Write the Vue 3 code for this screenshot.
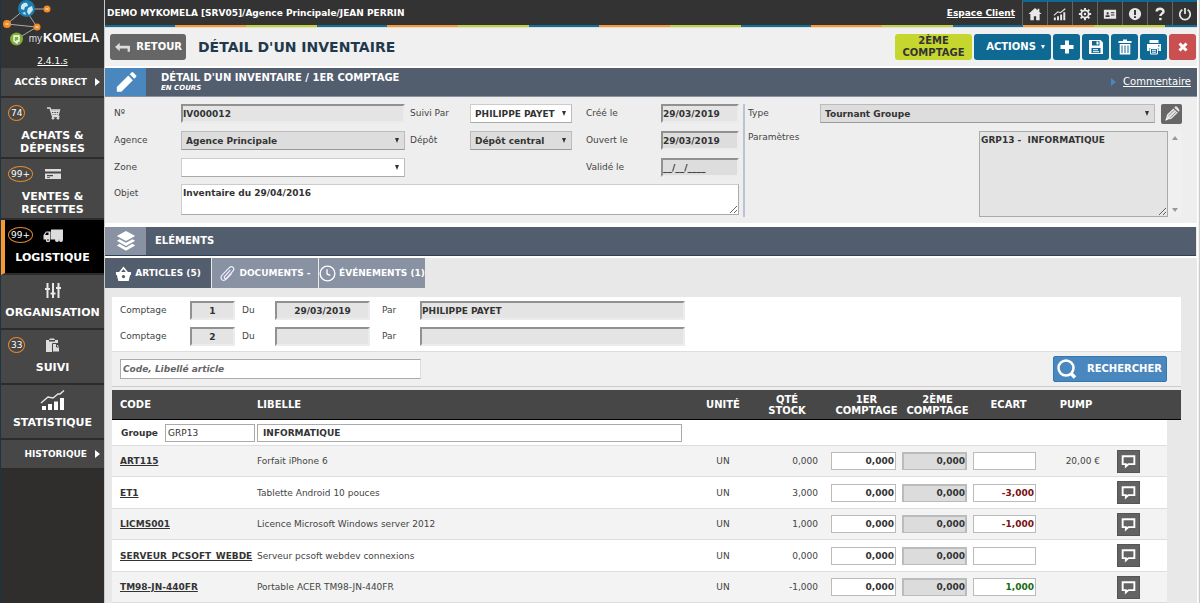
<script setup>
import { ref } from 'vue'

const topIcons = [
  { name: 'Accueil', paths: [{ d: 'M8 1 0.5 8h2.2v7h4v-4.5h2.6V15h4V8h2.2L13 5.6V2h-2v1.8z' }] },
  { name: 'Statistiques', paths: [{ d: 'M1 12h2.2v3H1zM4.6 10.5h2.2V15H4.6zM8.2 8.5h2.2V15H8.2zM11.8 6H14v9h-2.200z' }, { d: 'M1 9.500 5.500 5.500l3 1L14 2', line: 1.2 }] },
  { name: 'Réglages', paths: [{ d: 'M8 3.800a4.200 4.200 0 1 0 0 8.400a4.200 4.200 0 1 0 0-8.400z', line: 2 }, { d: 'M8 1v3M8 12v3M1 8h3M12 8h3M3 3l2 2M11 11l2 2M13 3l-2 2M5 11l-2 2', line: 2.2 }, { d: 'M8 6.600a1.400 1.400 0 1 0 0 2.800a1.400 1.400 0 1 0 0-2.800z' }] },
  { name: 'Profil', paths: [{ d: 'M1 3h14v10.500H1zM3 9.500h4.500v1.800H3zM4.200 6h2.200v2.600H4.200zM9 6v1.200h4V6zM9 8.500v1.200h4V8.500z' }] },
  { name: 'Alertes', paths: [{ d: 'M8 1a7 7 0 1 0 0 14a7 7 0 1 0 0-14zM6.900 3.500h2.200v5.700H6.900zM6.900 10.500h2.200v2.200H6.900z' }] },
  { name: 'Aide', paths: [{ d: 'M4.200 5.200C4.200 0.900 12 1 12 5c0 2.600-3.600 2.600-3.600 5.400', line: 2.800 }, { d: 'M7 12.400h2.800v2.700H7z' }] },
  { name: 'Quitter', paths: [{ d: 'M5 3.200a6 6 0 1 0 6 0M8 1v7', line: 2 }] },
]

const actionIcons = [
  { name: 'Ajouter', paths: [{ d: 'M6 1.500h4V6h4.500v4H10v4.500H6V10H1.500V6H6z' }] },
  { name: 'Enregistrer', paths: [{ d: 'M1 1h11.500L15 3.500V15H1zM4 2v4.500h7.500V2zM8.500 2.600h2v3h-2zM3.500 9v5h9V9z' }, { d: 'M5 10.700h5M5 12.700h6', line: 1 }] },
  { name: 'Supprimer', paths: [{ d: 'M6 0.500h4V2h4.500v2h-13V2H6zM2.700 5h10.600v10.500H2.700zM4.500 6.500v7.500h1V6.500zM7.500 6.500v7.500h1V6.500zM10.500 6.500v7.500h1V6.500z' }] },
  { name: 'Imprimer', paths: [{ d: 'M3.500 1h9v3h-9zM1 5h14v7h-2.500V9h-9v3H1zM12 6.200v1.200h1.500V6.200z' }, { d: 'M4.500 9.500h7v5.500h-7zM6 11.300h4M6 13.200h4', line: 1 }] },
  { name: 'Fermer', paths: [{ d: 'M4.500 4.500l7 7M11.500 4.500l-7 7', line: 3 }] },
]

const menu = [
  { label: 'ACHATS & DÉPENSES', badge: '74', icon: 'cart', size: 'tall' },
  { label: 'VENTES & RECETTES', badge: '99+', icon: 'card', size: 'tall' },
  { label: 'LOGISTIQUE', badge: '99+', icon: 'truck', active: true },
  { label: 'ORGANISATION', icon: 'sliders' },
  { label: 'SUIVI', badge: '33', icon: 'paste' },
  { label: 'STATISTIQUE', icon: 'chart' },
]

const counts = ref([
  { n: '1', date: '29/03/2019', by: 'PHILIPPE PAYET' },
  { n: '2', date: '', by: '' },
])

const rows = ref([
  { code: 'ART115', label: 'Forfait iPhone 6', unit: 'UN', stock: '0,000', c1: '0,000', c2: '0,000', gap: '', pump: '20,00 €' },
  { code: 'ET1', label: 'Tablette Android 10 pouces', unit: 'UN', stock: '3,000', c1: '0,000', c2: '0,000', gap: '-3,000', pump: '' },
  { code: 'LICMS001', label: 'Licence Microsoft Windows server 2012', unit: 'UN', stock: '1,000', c1: '0,000', c2: '0,000', gap: '-1,000', pump: '' },
  { code: 'SERVEUR_PCSOFT_WEBDE', label: 'Serveur pcsoft webdev connexions', unit: 'UN', stock: '0,000', c1: '0,000', c2: '0,000', gap: '', pump: '' },
  { code: 'TM98-JN-440FR', label: 'Portable ACER TM98-JN-440FR', unit: 'UN', stock: '-1,000', c1: '0,000', c2: '0,000', gap: '1,000', pump: '' },
])

const search = ref('')
</script>

<template>
  <div class="app">
    <aside class="side">
      <div class="brand">
        <svg class="logo" viewBox="0 0 104 50" role="img" aria-label="myKOMELA">
          <path d="M26 9h20M24 10 7 24M27 12l10 15M7 24l29 3M35 28 17 39" stroke="#aaa" fill="none" />
          <circle cx="26.500" cy="8.500" r="8.500" fill="#1a7fb0" />
          <path d="M21 6q2-4 6-3l1 3-3 1-1 3-3-1zM28 8l4-2 1 4-4 5-2-3zM22 13l3-1 1 3z" fill="#cfe9f4" />
          <circle cx="47" cy="9" r="3.500" fill="#f28c28" />
          <circle cx="7" cy="24" r="4" fill="#f28c28" />
          <circle cx="37" cy="27" r="3.500" fill="#f28c28" />
          <path d="M45.500 9h3M5.500 24h3M35.500 27h3" stroke="#fff" />
          <circle cx="16.500" cy="39" r="6.500" fill="#7fae3a" />
          <path d="M14 36h5v5h-2v2l-3-2z" fill="none" stroke="#fff" stroke-width="1.300" />
          <text x="42" y="42" class="logo-my">my</text>
          <text x="43" y="42" class="logo-name">KOMELA</text>
        </svg>
        <a href="#" class="version">2.4.1.s</a>
      </div>
      <nav class="nav">
        <a href="#" class="slim">ACCÈS DIRECT<span class="tri"></span></a>
        <a v-for="m in menu" :key="m.label" href="#" class="item" :class="[m.size, { active: m.active }]">
          <span v-if="m.badge" class="badge">{{ m.badge }}</span>
          <svg class="nav-icon" :class="m.icon" viewBox="0 0 24 18" aria-hidden="true">
            <g v-if="m.icon === 'cart'">
              <path d="M6 3h3l2.500 8.500h7M9.500 5h9l-1.500 5.500h-6" fill="none" stroke="#ddd" stroke-width="1.300" />
              <path d="M10 6.500h8M10.500 8.500h7M12.500 5l.8 6M15.300 5v6" stroke="#ddd" />
              <circle cx="12" cy="13.300" r="1.300" fill="#ddd" /><circle cx="17" cy="13.300" r="1.300" fill="#ddd" />
            </g>
            <path v-else-if="m.icon === 'card'" d="M4 3h16v2.500H4zM4 7.500h16V13H4zM6 9v1.300h6V9zM6 11.200v.8h3v-.8z" fill="#ddd" fill-rule="evenodd" />
            <g v-else-if="m.icon === 'truck'" fill="#ddd">
              <path d="M10 2.500h12v10H10zM2.500 8 5 4.500h4.500v8h-7zM4 8h3.500V5.500h-2z" fill-rule="evenodd" />
              <circle cx="7" cy="13" r="2.200" /><circle cx="16" cy="13" r="2" /><circle cx="20" cy="13" r="2" />
              <circle cx="7" cy="13" r="0.800" fill="#000" />
            </g>
            <path v-else-if="m.icon === 'sliders'" d="M6.500 1v15M12 1v15M17.500 1v15M4 7h5M9.500 11.500h5M15 6h5" fill="none" stroke="#e8e8e8" stroke-width="2" />
            <g v-else-if="m.icon === 'paste'">
              <path d="M5 3h3l1-1.500h4L14 3h3v3h-5v9H5zM8 3v1.500h6V3z" fill="#ddd" fill-rule="evenodd" />
              <path d="M11.500 6.500h4L18.500 9.500V15h-7z" fill="#ddd" stroke="#474747" /><path d="M15.500 7v3h3" fill="none" stroke="#474747" />
            </g>
            <g v-else>
              <path d="M1 14h4v4H1zM7 12h4v6H7zM13 9.500h4V18h-4zM19 6h4v12h-4z" fill="#fff" />
              <path d="M0 11 7 5l5 1 5-4h2l4-3.500" fill="none" stroke="#e8e8e8" stroke-width="1.400" />
            </g>
          </svg>
          <span class="item-label">{{ m.label }}</span>
        </a>
        <a href="#" class="slim">HISTORIQUE<span class="tri"></span></a>
      </nav>
    </aside>

    <main class="main">
      <header class="topbar">
        <span class="crumb">DEMO MYKOMELA [SRV05]/Agence Principale/JEAN PERRIN</span>
        <a href="#" class="client">Espace Client</a>
        <button v-for="i in topIcons" :key="i.name" type="button" class="top-btn" :aria-label="i.name">
          <svg viewBox="0 0 16 16" aria-hidden="true">
            <path v-for="(p, k) in i.paths" :key="k" :d="p.d" :class="p.line ? 'stroke' : 'solid'" :stroke-width="p.line" />
          </svg>
        </button>
      </header>
      <div class="stripes"></div>

      <div class="titlebar">
        <button type="button" class="back">
          <svg viewBox="0 0 18 14" aria-hidden="true"><path d="M1 6.500 6 2v3h11v6.500h-2.500V8H6v3z" fill="#ddd" /></svg>
          RETOUR
        </button>
        <h1>DÉTAIL D'UN INVENTAIRE</h1>
        <div class="actions">
          <button type="button" class="act second">2ÈME COMPTAGE</button>
          <button type="button" class="act menu">ACTIONS <span class="down"></span></button>
          <button v-for="i in actionIcons" :key="i.name" type="button" class="act icon" :class="{ close: i.name === 'Fermer' }" :aria-label="i.name">
            <svg viewBox="0 0 16 16" aria-hidden="true">
              <path v-for="(p, k) in i.paths" :key="k" :d="p.d" :class="p.line ? 'stroke' : 'solid'" :stroke-width="p.line" />
            </svg>
          </button>
        </div>
      </div>

      <section class="banner">
        <div class="banner-icon blue">
          <svg viewBox="0 0 24 24" aria-hidden="true"><path d="M2 22.500v-5L14.500 5l5 5L7 22.500zM16 3.500l2-2q1-.8 2 0l3 3q.8 1 0 2l-2 2z" fill="#fff" /></svg>
        </div>
        <div class="banner-text">
          <h2>DÉTAIL D'UN INVENTAIRE / 1ER COMPTAGE</h2>
          <em>EN COURS</em>
        </div>
        <a href="#" class="comment"><span class="tri blue-tri"></span><span class="ul">Commentaire</span></a>
      </section>

      <form class="form" @submit.prevent>
        <div class="left">
          <label for="num">Nº</label>
          <input id="num" class="inset" value="IV000012" readonly />
          <label for="suivi" class="c2">Suivi Par</label>
          <span class="sel"><select id="suivi"><option>PHILIPPE PAYET</option></select></span>
          <label for="cree" class="c3">Créé le</label>
          <input id="cree" class="inset" value="29/03/2019" readonly />

          <label for="agence">Agence</label>
          <span class="sel grey"><select id="agence"><option>Agence Principale</option></select></span>
          <label for="depot" class="c2">Dépôt</label>
          <span class="sel grey"><select id="depot"><option>Dépôt central</option></select></span>
          <label for="ouvert" class="c3">Ouvert le</label>
          <input id="ouvert" class="inset dim" value="29/03/2019" readonly />

          <label for="zone">Zone</label>
          <span class="sel"><select id="zone"><option></option></select></span>
          <label for="valide" class="c3 last">Validé le</label>
          <input id="valide" class="inset dim" value="__/__/____" readonly />

          <label for="objet">Objet</label>
          <textarea id="objet" class="object">Inventaire du 29/04/2016</textarea>
        </div>
        <div class="right">
          <label for="type">Type</label>
          <div class="type-row">
            <span class="sel grey"><select id="type"><option>Tournant Groupe</option></select></span>
            <button type="button" class="edit" aria-label="Modifier">
              <svg viewBox="0 0 20 20" aria-hidden="true">
                <path d="M3 16.500l1.500-6L11.500 4l5 4.500L9 15.500zM12.500 3l1.500-1.500q1.500-.5 4.500 4.500L17.500 7.500z" fill="#e4e4e4" />
                <path d="M6 12l7-6.500M8 14l7-6.500" stroke="#777" stroke-width="0.800" /><path d="M2.500 17.500l1-3 2 2z" fill="#fff" />
              </svg>
            </button>
          </div>
          <label for="params" class="plabel">Paramètres</label>
          <div class="params">
            <textarea id="params" readonly>GRP13 -  INFORMATIQUE</textarea>
            <div class="scroll"><span class="up"></span><span class="dn"></span></div>
          </div>
        </div>
      </form>

      <section class="banner second-banner">
        <div class="banner-icon slate">
          <svg viewBox="0 0 24 24" aria-hidden="true">
            <path d="M12 1l10 5.500L12 12 2 6.500zM5 10l7 4 7-4 3 1.800L12 17.500 2 11.800zM5 15l7 4 7-4 3 1.800L12 22.500 2 16.800z" fill="#fff" />
          </svg>
        </div>
        <h2>ELÉMENTS</h2>
      </section>

      <div class="tabs" role="tablist">
        <button type="button" role="tab" aria-selected="true" class="tab on">
          <svg viewBox="0 0 18 18" aria-hidden="true">
            <path d="M5 8l4-5 4 5" fill="none" stroke="#fff" stroke-width="1.800" />
            <path d="M1 7.500h16v3h-1L14.500 17h-11L2 10.500H1zM9 10.500a1.800 1.800 0 1 0 0 3.600a1.800 1.800 0 1 0 0-3.600z" fill="#fff" fill-rule="evenodd" />
          </svg>
          ARTICLES (5)
        </button>
        <button type="button" role="tab" aria-selected="false" class="tab">
          <svg viewBox="0 0 18 18" aria-hidden="true">
            <path d="M12 5.500 6 12q-1 1.500.2 2.200 1 .6 2-.5l6.500-7.200q2-2.600 0-4.200-2-1.400-4 .7L3.500 10.500q-2.500 3-.5 5 2.200 2 5-.8l5.500-6" fill="none" stroke="#eef" stroke-width="1.300" />
          </svg>
          DOCUMENTS -
        </button>
        <button type="button" role="tab" aria-selected="false" class="tab">
          <svg viewBox="0 0 18 18" aria-hidden="true">
            <circle cx="9" cy="9" r="7.800" fill="none" stroke="#fff" stroke-width="1.400" />
            <path d="M8.500 4.500v5l3.500 1.500" fill="none" stroke="#fff" stroke-width="1.400" />
          </svg>
          ÉVÉNEMENTS (1)
        </button>
      </div>

      <div class="panel">
        <div class="counts">
          <template v-for="c in counts" :key="c.n">
            <label :for="'n' + c.n">Comptage</label>
            <input :id="'n' + c.n" class="inset mid" :value="c.n" readonly />
            <label :for="'d' + c.n" class="du">Du</label>
            <input :id="'d' + c.n" class="inset mid" :value="c.date" readonly />
            <label :for="'p' + c.n" class="par">Par</label>
            <input :id="'p' + c.n" class="inset" :value="c.by" readonly />
          </template>
        </div>

        <form class="search" @submit.prevent>
          <input v-model="search" type="text" aria-label="Code, Libellé article" placeholder="Code, Libellé article" />
          <button type="submit">
            <svg viewBox="0 0 22 22" aria-hidden="true">
              <circle cx="10" cy="10" r="7.500" fill="none" stroke="#fff" stroke-width="2.500" />
              <path d="M15 15.500l4 4" stroke="#fff" stroke-width="3.500" />
            </svg>
            RECHERCHER
          </button>
        </form>

        <table class="grid">
          <colgroup>
            <col class="w-code" /><col /><col class="w-unit" /><col class="w-stock" />
            <col class="w-num" /><col class="w-num" /><col class="w-num" />
            <col class="w-pump" /><col class="w-com" /><col class="w-end" />
          </colgroup>
          <thead>
            <tr>
              <th class="txt">CODE</th>
              <th class="txt">LIBELLE</th>
              <th>UNITÉ</th>
              <th class="h-stock">QTÉ<br />STOCK</th>
              <th>1ER<br />COMPTAGE</th>
              <th>2ÈME<br />COMPTAGE</th>
              <th>ECART</th>
              <th>PUMP</th>
              <th></th>
              <th></th>
            </tr>
          </thead>
          <tbody>
            <tr class="group">
              <td colspan="9">
                <div class="group-row">
                  <label for="grp">Groupe</label>
                  <input id="grp" class="grp-code" value="GRP13" />
                  <input class="grp-name" aria-label="Libellé du groupe" value="INFORMATIQUE" />
                </div>
              </td>
              <td class="end"></td>
            </tr>
            <tr v-for="r in rows" :key="r.code" class="line">
              <td class="txt"><a href="#">{{ r.code }}</a></td>
              <td class="txt">{{ r.label }}</td>
              <td class="ctr">{{ r.unit }}</td>
              <td class="stock">{{ r.stock }}</td>
              <td><input v-model="r.c1" class="num" :aria-label="'1er comptage ' + r.code" /></td>
              <td><input class="num inset dark" :value="r.c2" :aria-label="'2ème comptage ' + r.code" readonly /></td>
              <td><input v-model="r.gap" class="num" :class="r.gap.startsWith('-') ? 'neg' : 'pos'" :aria-label="'Écart ' + r.code" /></td>
              <td class="pump">{{ r.pump }}</td>
              <td class="com">
                <button type="button" :aria-label="'Commentaire ' + r.code">
                  <svg viewBox="0 0 16 16" aria-hidden="true"><path d="M2.500 3h11v7.500H8l-2.500 2.200v-2.200h-3z" fill="none" stroke="#fff" stroke-width="1.800" /></svg>
                </button>
              </td>
              <td class="end"></td>
            </tr>
          </tbody>
        </table>
      </div>
    </main>
    <div class="edge"></div>
  </div>
</template>

<style>
html, body { overflow: hidden; background: #e8e8e8; }
</style>

<style scoped>
.app {
  display: flex;
  min-height: 100vh;
  font-family: "DejaVu Sans", Verdana, sans-serif;
  font-size: 9px;
  line-height: 12px;
  color: #333;
}
.app * { box-sizing: border-box; }
button, input, select, textarea {
  font: inherit;
  font-weight: bold;
  color: #333;
  margin: 0;
  border: 0;
  border-radius: 0;
  outline: 0;
}
input, textarea, select { min-width: 0; width: 100%; }
button { padding: 0; cursor: pointer; }
h1, h2 { margin: 0; }
.stroke { fill: none; stroke: currentColor; }
.solid { fill: currentColor; fill-rule: evenodd; }

/* sidebar */
.side {
  flex: 0 0 105px;
  background: #302e2d;
  border-left: 1px solid #1b3542;
  border-right: 1px solid #c8c8c8;
}
.brand {
  height: 68px;
  display: flex;
  flex-direction: column;
  align-items: center;
  background: #333;
}
.logo { width: 104px; height: 50px; flex: none; margin-left: -1px; }
.logo-my { font: 10px "Liberation Sans", sans-serif; fill: #ddd; text-anchor: end; }
.logo-name { font: bold 13px "Liberation Sans", sans-serif; fill: #fff; }
.version { margin-top: 5px; color: #fff; font-size: 9px; }
.slim, .item {
  display: flex;
  background: #474747;
  border-bottom: 2px solid #2e2c2b;
  color: #fff;
  font-weight: bold;
  text-decoration: none;
}
.slim {
  height: 30px;
  align-items: center;
  justify-content: flex-end;
  gap: 8px;
  padding-right: 4px;
}
.tri {
  border: 4px solid transparent;
  border-left: 5px solid #fff;
  border-right: 0;
}
.item {
  position: relative;
  flex-direction: column;
  align-items: center;
  height: 55px;
  padding-top: 7px;
  font-size: 11px;
  line-height: 13px;
  text-align: center;
}
.item.tall { height: 61px; }
.item.tall .item-label { width: 84px; }
.item.active { background: #000; border-left: 4px solid #f79a33; padding-right: 4px; }
.nav-icon { width: 24px; height: 18px; overflow: visible; flex: none; }
.item-label { margin-top: 6px; }
.badge {
  position: absolute;
  left: 7px;
  top: 7px;
  min-width: 17px;
  height: 16px;
  padding: 0 2px;
  border: 1px solid #e58a2c;
  border-radius: 50%;
  font-size: 9px;
  font-weight: normal;
  line-height: 14px;
}
.active .badge { left: 3px; }

/* top of the page */
.main { flex: 1; min-width: 0; background: #e8e8e8; }
.edge { flex: 0 0 3px; background: #f1f1f1; border-left: 1px solid #fff; border-right: 1px solid #ccc; }
.topbar { display: flex; align-items: center; height: 25px; padding-left: 2px; background: #333; color: #fff; font-weight: bold; }
.crumb { flex: 1; white-space: nowrap; }
.client { color: #fff; margin-right: 7px; }
.top-btn {
  width: 25px;
  height: 25px;
  display: flex;
  align-items: center;
  justify-content: center;
  background: #333;
  border-top: 2px solid #0e6893;
  border-left: 1px solid #666;
  color: #e8e8e8;
}
.top-btn svg { width: 14px; height: 14px; }
.stripes {
  height: 3px;
  border-bottom: 1px solid #ddd;
  background: repeating-linear-gradient(90deg, #136f96 0 70px, #f79a33 70px 141px, #c3d23a 141px 212px);
}
.titlebar {
  display: flex;
  align-items: center;
  height: 40px;
  padding: 0 1px 0 5px;
  background: #f0f0f0;
  border-bottom: 2px solid #fff;
}
.back {
  display: flex;
  align-items: center;
  justify-content: space-between;
  width: 76px;
  height: 26px;
  padding: 0 4px;
  background: #666;
  border-radius: 3px;
  color: #fff;
  font-size: 10px;
}
.back svg { width: 17px; height: 13px; }
h1 { margin-left: 12px; font-size: 14px; line-height: 18px; color: #22384c; flex: 1; white-space: nowrap; }
.actions { display: flex; gap: 2px; }
.act {
  display: flex;
  align-items: center;
  justify-content: center;
  height: 26px;
  border-radius: 3px;
  background: #0f6a93;
  color: #fff;
  font-size: 10px;
}
.act.second { width: 77px; background: #c5d72f; color: #333; line-height: 12px; }
.act.menu { width: 77px; gap: 5px; padding-left: 6px; }
.act.icon { width: 27px; }
.act.icon svg { width: 16px; height: 16px; }
.act.close { background: #c94f50; }
.down { border: 2px solid transparent; border-top: 4px solid #fff; border-bottom: 0; }

/* section banners */
.banner { display: flex; align-items: stretch; height: 29px; background: #525d6e; border-bottom: 1px solid #8a929e; color: #fff; }
.banner h2 { font-size: 10px; line-height: 12px; }
.banner-icon { width: 41px; display: flex; align-items: center; justify-content: center; }
.banner-icon svg { width: 22px; height: 22px; }
.banner-icon.blue { background: #4a87be; }
.banner-icon.slate { background: #8892a2; }
.banner-text { flex: 1; padding: 4px 0 0 15px; }
.banner em { display: block; font-size: 7px; line-height: 8px; font-weight: bold; }
.comment { display: flex; align-items: center; gap: 7px; margin-right: 6px; color: #fff; font-size: 10px; text-decoration: none; }
.ul { text-decoration: underline; }
.blue-tri { border-left-color: #4a87be; }
.second-banner { margin-right: 1px; align-items: center; border-bottom-color: #2f4157; }
.second-banner .banner-icon { align-self: stretch; }
.second-banner h2 { margin-left: 9px; }

/* details form */
.form {
  display: grid;
  grid-template-columns: 631fr 437fr;
  padding: 7px 15px 6px 9px;
  background: #eee;
  border-bottom: 4px solid #fff;
}
.left {
  display: grid;
  grid-template-columns: 67px minmax(0, 1fr) 65px 102px 89px 78px;
  grid-template-rows: 27px 27px 26px 33px;
  align-items: start;
  padding-right: 4px;
  border-right: 2px solid #b9c3d1;
}
.form label, .counts label { line-height: 19px; color: #444; white-space: nowrap; }
.c2 { padding-left: 5px; }
.c3 { padding-left: 14px; }
.last { grid-column: 5; }
.inset {
  height: 19px;
  padding: 0;
  background: #e4e4e4;
  border: 2px solid;
  border-color: #919191 #ececec #ececec #919191;
}
.inset.dim { background: #ddd; }
.inset.mid { text-align: center; }
.sel { position: relative; display: block; }
.sel select {
  display: block;
  appearance: none;
  height: 19px;
  padding: 0 14px 0 4px;
  background: #fff;
  border: 1px solid #ccc;
  border-bottom-color: #aaa;
  border-right-color: #bbb;
}
.sel.grey select { background: #ddd; border-color: #bbb; border-bottom-color: #999; }
.sel::after {
  content: "";
  position: absolute;
  right: 6px;
  top: 7px;
  border: 2px solid transparent;
  border-top: 5px solid #333;
  border-bottom: 0;
  pointer-events: none;
}
.object {
  grid-column: 2 / -1;
  height: 31px;
  padding: 2px 1px;
  background: #fff;
  border: 1px solid #aaa;
  border-color: #ccc #aaa #aaa #ccc;
}
.right {
  display: grid;
  grid-template-columns: 72px minmax(0, 1fr);
  grid-template-rows: 27px 86px;
  padding-left: 3px;
  align-items: start;
}
.type-row { display: flex; gap: 6px; }
.type-row .sel { flex: 1; }
.edit { width: 21px; height: 20px; background: #666; border-radius: 2px; }
.edit svg { display: block; width: 18px; height: 18px; margin: auto; }
.form .plabel { line-height: 12px; }
.params { display: flex; justify-content: flex-end; }
.params textarea {
  width: 189px;
  height: 86px;
  padding: 2px 1px;
  background: #e4e4e4;
  border: 1px solid #aaa;
  white-space: pre-wrap;
}
.scroll {
  width: 14px;
  display: flex;
  flex-direction: column;
  justify-content: space-between;
  align-items: center;
  padding: 5px 0;
  background: #f0f0f0;
}
.up, .dn { border: 3px solid transparent; }
.up { border-bottom: 4px solid #999; border-top: 0; }
.dn { border-top: 4px solid #999; border-bottom: 0; }

/* tabs */
.tabs { display: flex; gap: 1px; height: 33px; border-top: 2px solid #fff; }
.tab {
  display: flex;
  align-items: center;
  justify-content: center;
  gap: 3px;
  width: 106px;
  height: 30px;
  background: #8892a2;
  color: #fff;
  white-space: nowrap;
}
.tab.on { background: #525d6e; }
.tab svg { width: 17px; height: 17px; flex: none; }

/* content panel */
.panel { margin: 8px 16px 0 7px; background: #fff; }
.counts {
  display: grid;
  grid-template-columns: 70px 45px 40px 95px 50px 265px;
  row-gap: 7px;
  padding: 4px 8px 5px;
}
.du { padding-left: 7px; }
.par { padding-left: 12px; }
.search {
  display: flex;
  align-items: center;
  justify-content: space-between;
  height: 36px;
  padding: 0 14px 0 8px;
  background: #f0f0f0;
  border-top: 1px solid #ddd;
  border-bottom: 1px solid #ccc;
}
.search input { width: 301px; height: 20px; padding: 0 2px; background: #fff; border: 1px solid #aaa; border-right-color: #ddd; }
.search input::placeholder { color: #666; opacity: 1; font-style: italic; }
.search button {
  display: flex;
  align-items: center;
  justify-content: space-between;
  width: 114px;
  height: 26px;
  padding: 0 4px 0 2px;
  background: #4a87be;
  border: 1px solid #2f7ab5;
  border-radius: 2px;
  color: #fff;
  font-size: 10px;
}
.search svg { width: 22px; height: 22px; }

/* article table */
.grid { width: 100%; table-layout: fixed; border-collapse: separate; border-spacing: 0; border-top: 3px solid #eee; }
.w-code { width: 137px; }
.w-unit { width: 56px; }
.w-stock { width: 80px; }
.w-num { width: 71px; }
.w-pump { width: 64px; }
.w-com { width: 59px; }
.w-end { width: 14px; }
th {
  height: 30px;
  padding: 0;
  background: #474747;
  border-bottom: 1px solid #000;
  color: #fff;
  font-size: 10px;
  line-height: 11px;
}
td { padding: 0; border-bottom: 1px solid #ddd; }
td.end { background: #e8e8e8; border-bottom: 0; }
.txt { text-align: left; padding-left: 8px; white-space: nowrap; }
.h-stock { padding-right: 8px; }
.line { height: 31px; background: #f3f3f3; }
.line:nth-child(odd) { height: 32px; background: #fff; }
.line td { color: #444; }
.line a { color: #333; font-weight: bold; }
.line td.ctr { text-align: center; }
.line td.stock { text-align: right; padding-right: 13px; }
.line td.pump { text-align: right; padding-right: 8px; }
.group td { height: 26px; }
.group-row { display: flex; align-items: center; padding-left: 9px; }
.group-row label { width: 44px; font-weight: bold; }
.group-row input { height: 18px; border: 1px solid #aaa; background: #fff; }
.group-row .grp-code { width: 90px; margin-right: 2px; padding: 0 2px; font-weight: normal; }
.group-row .grp-name { width: 425px; padding: 0 5px; }
.num { display: block; width: 65px; height: 18px; padding: 0 1px; text-align: right; background: #fff; border: 1px solid #bbb; }
.num.inset { height: 18px; padding: 0 0 1px; border-width: 2px 2px 1px; background: #dcdcdc; }
.num.neg { color: #7a1010; width: 63px; }
.num.pos { color: #156c15; width: 63px; }
.com button { display: flex; align-items: center; justify-content: center; width: 23px; height: 23px; margin-left: 9px; background: #636363; border: 1px solid #555; }
.com svg { width: 17px; height: 17px; }
</style>
